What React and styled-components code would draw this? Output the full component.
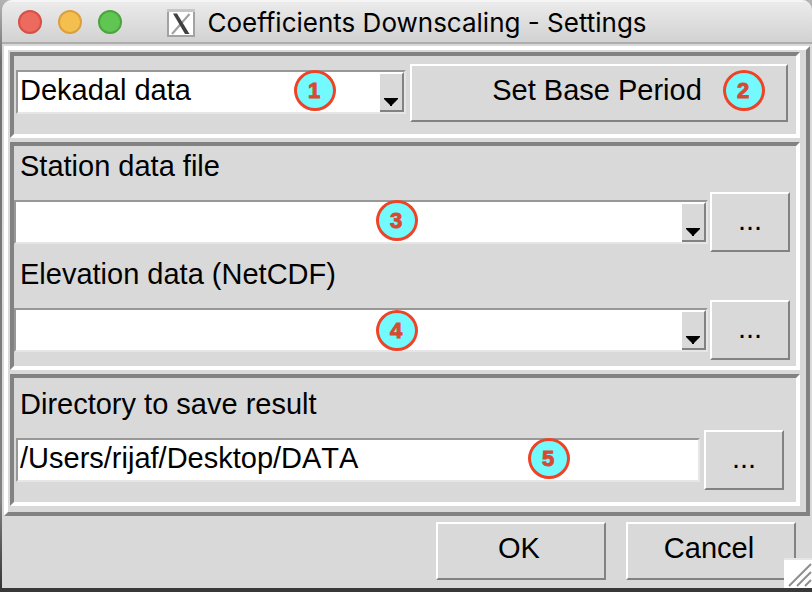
import React from "react";
import styled, { createGlobalStyle } from "styled-components";

const face = "#d9d9d9";
const dark = "#828282";

const GlobalStyle = createGlobalStyle`
  * { box-sizing: border-box; }
  body {
    margin: 0;
    background: linear-gradient(#b4b4b4 0, #707070 60px, #828282 500px, #383838 586px);
    font-family: "Liberation Sans", Arial, sans-serif;
    font-size: 29px;
    color: #000;
  }
  body, button, input, select { font-kerning: none; }
`;

const Window = styled.main`
  position: relative;
  margin: 0 0 4px 2px;
  background: ${face};
  border-radius: 10px 10px 0 0;
  overflow: hidden;
`;

const TitleBar = styled.header`
  display: grid;
  grid-template-columns: 1fr auto 1fr;
  align-items: center;
  height: 44px;
  padding: 0 16px;
  background: linear-gradient(#ebebeb, #d2d2d2);
  border-top: 2px solid #f5f5f5;
  border-bottom: 2px solid #adadad;
`;

const Lights = styled.div`
  display: flex;
  gap: 16px;
`;

const Light = styled.button`
  width: 24px;
  height: 24px;
  padding: 0;
  border-radius: 50%;
  border: 2px solid ${(p) => p.$edge};
  background: ${(p) => p.$fill};
`;

const Title = styled.h1`
  display: flex;
  align-items: center;
  gap: 12px;
  margin: 0;
  padding-top: 2px;
  font: 400 26px/36px Inter, sans-serif;
  font-kerning: normal;
  white-space: nowrap;
`;

const Frame = styled.div`
  display: flex;
  flex-direction: column;
  gap: 4px;
  margin: 2px 2px 0;
  padding: 2px 6px 6px 2px;
  border: 4px solid;
  border-color: #fff ${dark} ${dark} #fff;
`;

const Group = styled.section`
  padding: ${(p) => p.$pad};
  border: 4px solid;
  border-color: ${dark} #fff #fff ${dark};
`;

const PeriodRow = styled.div`
  display: grid;
  grid-template-columns: minmax(0, 390fr) minmax(0, 378fr);
  gap: 4px;
  align-items: center;
`;

const FieldRow = styled.div`
  display: flex;
  align-items: center;
  gap: ${(p) => p.$gap};
  margin-bottom: ${(p) => p.$after || "0"};
`;

const Label = styled.label`
  display: block;
  padding: 0 0 6px ${(p) => p.$indent || "6px"};
  line-height: 40px;
`;

const Field = styled.div`
  position: relative;
  flex: 1;
  min-width: 0;
  height: 44px;
  margin-bottom: ${(p) => p.$raise || "0"};
  background: #fff;
  border: 2px solid;
  border-color: #989898 #e6e6e6 #e6e6e6 #989898;
`;

const Select = styled.select`
  display: block;
  appearance: none;
  width: 100%;
  height: 40px;
  padding: 0 28px 4px 2px;
  border: 0;
  border-radius: 0;
  background: transparent;
  color: #000;
  font: inherit;
  font-kerning: none;
  line-height: 36px;
`;

const TextInput = styled.input`
  display: block;
  width: 100%;
  height: 40px;
  padding: 0 2px 4px;
  border: 0;
  background: transparent;
  color: #000;
  font: inherit;
  font-kerning: none;
`;

const ArrowBox = styled.span`
  position: absolute;
  top: 0;
  right: 0;
  bottom: 0;
  width: 24px;
  display: flex;
  justify-content: center;
  align-items: flex-end;
  padding-bottom: 4px;
  background: ${face};
  border: solid;
  border-width: 2px 2px 2px 0;
  border-color: #fff ${dark} ${dark};
  pointer-events: none;
`;

const PushButton = styled.button`
  position: relative;
  flex: none;
  width: ${(p) => p.$width || "auto"};
  height: 58px;
  padding: 0 8px 6px 4px;
  background: ${face};
  border: 2px solid;
  border-color: #fff ${dark} ${dark} #fff;
  color: #000;
  font: inherit;
  font-kerning: none;
  white-space: nowrap;
`;

const BrowseButton = styled(PushButton)`
  width: 80px;
  height: 60px;
  padding: 0 4px 4px;
`;

const Badge = styled.span`
  position: absolute;
  top: ${(p) => p.$top || "-2px"};
  left: ${(p) => p.$left};
  display: flex;
  align-items: center;
  justify-content: center;
  width: 42px;
  height: 41px;
  margin-left: -21px;
  padding-right: 2px;
  border: 3px solid #ee4326;
  border-radius: 50%;
  background: #72faff;
  color: #d64b30;
  font: 700 22px/34px "Liberation Sans", Arial, sans-serif;
  -webkit-text-stroke: 1px #d64b30;
  pointer-events: none;
`;

const Footer = styled.footer`
  display: flex;
  justify-content: flex-end;
  gap: 20px;
  padding: 6px 16px 8px;
`;

const Grip = styled.div`
  position: absolute;
  right: 0;
  bottom: 0;
  width: 28px;
  height: 30px;
  background: #fff;
  border-top: 2px solid #e6e6e6;
`;

function XIcon() {
  return (
    <svg width="28" height="28" viewBox="0 0 28 28" aria-hidden="true">
      <path d="M1 1h26v26H1z" fill="#fff" stroke="#a2a2a2" strokeWidth="2" />
      <path d="M0 1.5h28" stroke="#c6c6c6" strokeWidth="3" />
      <path d="M22.500 5L5 25" stroke="#a0a0a0" strokeWidth="2" />
      <path d="M6 4.500h4L22.500 25h-4.500z" fill="#404040" />
    </svg>
  );
}

function Arrow() {
  return (
    <ArrowBox aria-hidden="true">
      <svg width="14" height="8" viewBox="0 0 14 8">
        <path d="M0 0h14v1L8 7v1H6V7L0 1z" />
      </svg>
    </ArrowBox>
  );
}

function FileField({ id, label, badge, badgeTop, after }) {
  return (
    <>
      <Label htmlFor={id}>{label}</Label>
      <FieldRow $gap="2px" $after={after}>
        <Field>
          <Select id={id} defaultValue="">
            <option value=""></option>
          </Select>
          <Arrow />
          <Badge $left="381px" $top={badgeTop}>{badge}</Badge>
        </Field>
        <BrowseButton type="button" aria-label={`Browse: ${label}`}>...</BrowseButton>
      </FieldRow>
    </>
  );
}

export default function App() {
  return (
    <>
      <GlobalStyle />
      <Window>
        <TitleBar>
          <Lights>
            <Light type="button" aria-label="Close" $fill="#ed6a5e" $edge="#d65045" />
            <Light type="button" aria-label="Minimize" $fill="#f5bf4f" $edge="#dba03c" />
            <Light type="button" aria-label="Zoom" $fill="#61c554" $edge="#4aa63b" />
          </Lights>
          <Title>
            <XIcon />
            Coefficients Downscaling - Settings
          </Title>
        </TitleBar>
        <Frame>
          <Group $pad="8px 8px 12px 2px">
            <PeriodRow>
              <Field $raise="2px">
                <Select aria-label="Time step" defaultValue="dekadal">
                  <option value="dekadal">Dekadal data</option>
                </Select>
                <Arrow />
                <Badge $left="297px">1</Badge>
              </Field>
              <PushButton type="button">
                Set Base Period
                <Badge $left="332px" $top="4px">2</Badge>
              </PushButton>
            </PeriodRow>
          </Group>
          <Group $pad="0 6px 6px 0">
            <FileField id="station" label="Station data file" badge="3" after="2px" />
            <FileField id="elevation" label="Elevation data (NetCDF)" badge="4" badgeTop="0" />
          </Group>
          <Group $pad="6px 12px 12px 2px">
            <Label htmlFor="directory" $indent="4px">Directory to save result</Label>
            <FieldRow $gap="4px">
              <Field>
                <TextInput id="directory" type="text" defaultValue="/Users/rijaf/Desktop/DATA" />
                <Badge $left="531px">5</Badge>
              </Field>
              <BrowseButton type="button" aria-label="Browse: Directory to save result">...</BrowseButton>
            </FieldRow>
          </Group>
        </Frame>
        <Footer>
          <PushButton type="button" $width="170px">OK</PushButton>
          <PushButton type="button" $width="170px">Cancel</PushButton>
        </Footer>
        <Grip>
          <svg width="28" height="28" viewBox="0 0 28 28" aria-hidden="true">
            <path d="M5 26L27 4M13 26L27 12M21 26L27 20" stroke="#8f8f8f" strokeWidth="2" fill="none" />
          </svg>
        </Grip>
      </Window>
    </>
  );
}
